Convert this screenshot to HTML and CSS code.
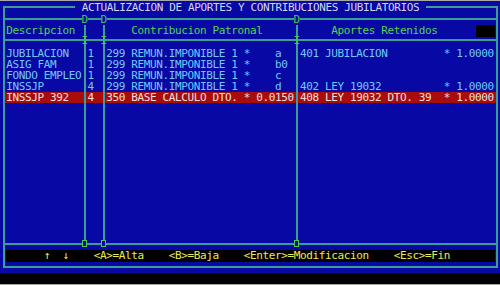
FILE: index.html
```html
<!DOCTYPE html>
<html lang="es">
<head>
    <meta charset="UTF-8">
    <meta name="viewport" content="width=device-width, initial-scale=1.0">
    <title>Actualizacion de aportes</title>
    <link rel="stylesheet" href="styles.css">
</head>
<body>
    <div class="screen">
        <div class="window">
            <div class="window-title">ACTUALIZACION DE APORTES Y CONTRIBUCIONES JUBILATORIOS</div>

            <div class="divider divider-top">
                <span class="joint joint-d joint-1">D</span>
                <span class="joint joint-d joint-2">D</span>
                <span class="joint joint-d joint-3">D</span>
            </div>

            <div class="cols header-row">
                <div class="cell col-desc">Descripcion</div>
                <div class="cell col-num"></div>
                <div class="cell col-contrib">Contribucion Patronal</div>
                <div class="cell col-aportes">Aportes Retenidos<span class="cursor-box"></span></div>
            </div>

            <div class="divider divider-mid">
                <span class="joint joint-i joint-1">I</span>
                <span class="joint joint-i joint-2">I</span>
                <span class="joint joint-i joint-3">I</span>
            </div>

            <div class="rows">
                <div class="cols spacer">
                    <div class="cell"></div><div class="cell"></div><div class="cell"></div><div class="cell"></div>
                </div>
                <div class="cols data-row">
                    <div class="cell col-desc">JUBILACION</div>
                    <div class="cell col-num">1</div>
                    <div class="cell col-contrib">299 REMUN.IMPONIBLE 1 *    a</div>
                    <div class="cell col-aportes">401 JUBILACION         * 1.0000</div>
                </div>
                <div class="cols data-row">
                    <div class="cell col-desc">ASIG FAM</div>
                    <div class="cell col-num">1</div>
                    <div class="cell col-contrib">299 REMUN.IMPONIBLE 1 *    b0</div>
                    <div class="cell col-aportes"></div>
                </div>
                <div class="cols data-row">
                    <div class="cell col-desc">FONDO EMPLEO</div>
                    <div class="cell col-num">1</div>
                    <div class="cell col-contrib">299 REMUN.IMPONIBLE 1 *    c</div>
                    <div class="cell col-aportes"></div>
                </div>
                <div class="cols data-row">
                    <div class="cell col-desc">INSSJP</div>
                    <div class="cell col-num">4</div>
                    <div class="cell col-contrib">299 REMUN.IMPONIBLE 1 *    d</div>
                    <div class="cell col-aportes">402 LEY 19032          * 1.0000</div>
                </div>
                <div class="cols data-row selected">
                    <div class="cell col-desc">INSSJP 392</div>
                    <div class="cell col-num">4</div>
                    <div class="cell col-contrib">350 BASE CALCULO DTO. * 0.0150</div>
                    <div class="cell col-aportes">408 LEY 19032 DTO. 39  * 1.0000</div>
                </div>
                <div class="cols filler">
                    <div class="cell"></div><div class="cell"></div><div class="cell"></div><div class="cell"></div>
                </div>
            </div>

            <div class="divider divider-bottom">
                <span class="joint joint-o joint-1"></span>
                <span class="joint joint-o joint-2"></span>
                <span class="joint joint-o joint-3"></span>
            </div>

            <div class="footer">
                <div class="keys">      ↑  ↓    &lt;A&gt;=Alta    &lt;B&gt;=Baja    &lt;Enter&gt;=Modificacion    &lt;Esc&gt;=Fin</div>
            </div>
        </div>
    </div>
    <div class="status-bar"></div>
</body>
</html>
```

FILE: styles.css
```css
* {
    margin: 0;
    padding: 0;
    box-sizing: border-box;
}

body {
    background-color: #000;
    font-family: 'DejaVu Sans Mono', monospace;
    font-size: 11px;
    line-height: 11px;
    letter-spacing: -0.3726px;
    overflow: hidden;
}

.screen {
    height: 273px;
    border-top: 1px solid #a8a8a8;
    background-color: #0808a4;
    padding: 5px 0 0 3px;
}

.window {
    width: 495px;
    height: 262px;
    border: 2px solid #3a9e96;
    display: flex;
    flex-direction: column;
}

.window-title {
    margin: -6px auto 0;
    padding: 0 6.5px;
    background-color: #0808a4;
    color: #d4d4ec;
    white-space: pre;
}

/* horizontal lines with the junction glyphs */
.divider {
    position: relative;
    flex-shrink: 0;
    height: 2px;
    background-color: #3a9e96;
}

.divider-top {
    margin-top: 5px;
}

.joint {
    position: absolute;
    color: #4cc84c;
}

.joint-d {
    top: -4px;
    width: 6px;
    text-align: center;
    background-color: #0808a4;
}

.joint-d.joint-1 { left: 76.5px; }
.joint-d.joint-2 { left: 95.5px; }
.joint-d.joint-3 { left: 288.5px; }

.joint-i {
    top: -4px;
    width: 6px;
    text-align: center;
}

.joint-i.joint-1 { left: 76.5px; }
.joint-i.joint-2 { left: 95.5px; }
.joint-i.joint-3 { left: 288.5px; }

.joint-o {
    top: -3px;
    width: 5px;
    height: 7px;
    border: 1px solid #4cc84c;
    background-color: #0808a4;
}

.joint-o.joint-1 { left: 77px; }
.joint-o.joint-2 { left: 96px; }
.joint-o.joint-3 { left: 289px; }

/* table columns */
.cols {
    display: grid;
    grid-template-columns: 81px 19px 193px 1fr;
}

.cell {
    border-right: 2px solid #3a9e96;
    white-space: pre;
    overflow: hidden;
}

.cell:last-child {
    border-right: none;
}

.col-desc { padding-left: 1.25px; }
.col-num { padding-left: 1.5px; }
.col-contrib { padding-left: 1.25px; }
.col-aportes { padding-left: 2px; }

.header-row {
    color: #52d452;
}

.header-row .cell {
    padding-top: 5px;
    height: 19px;
}

.header-row .col-contrib { padding-left: 26.25px; }

.header-row .col-aportes {
    display: flex;
    padding-left: 33.25px;
}

.cursor-box {
    width: 19px;
    height: 12px;
    margin: 0 1px 0 auto;
    background-color: #000;
}

.rows {
    flex: 1;
    display: flex;
    flex-direction: column;
}

.spacer {
    height: 7px;
}

.data-row {
    height: 11px;
    color: #72c8f8;
}

.data-row.selected {
    background-color: #a80c0c;
    color: #e8e0e0;
}

.filler {
    flex: 1;
}

.footer {
    flex-shrink: 0;
    padding: 5px 1px 4px;
}

.keys {
    height: 12px;
    line-height: 12px;
    padding-left: 0.25px;
    background-color: #000;
    color: #ecec52;
    white-space: pre;
}

.status-bar {
    height: 12px;
    border-bottom: 1px solid #a8a8a8;
}
```
